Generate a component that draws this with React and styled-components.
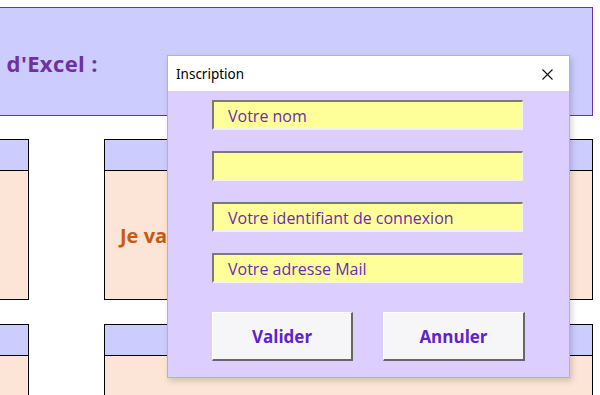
import React from "react";
import styled, { createGlobalStyle } from "styled-components";

const Global = createGlobalStyle`
  html, body { margin: 0; padding: 0; background: #ffffff; }
  body { width: 600px; height: 395px; overflow: hidden; font-family: "Open Sans", "Noto Sans", sans-serif; }
`;

const Sheet = styled.div`
  position: relative;
  width: 600px;
  height: 395px;
  overflow: hidden;
  padding-top: 7px;
  box-sizing: border-box;
  background: #ffffff;
`;

const Banner = styled.div`
  margin-left: -300px;
  width: 893px;
  height: 109px;
  box-sizing: border-box;
  border: 1px solid #7030a0;
  background: #ccccff;
  display: flex;
  align-items: center;
`;

const BannerTitle = styled.div`
  width: 397px;
  display: flex;
  justify-content: flex-end;
  white-space: nowrap;
  padding-top: 3px;
  font-family: "Open Sans", sans-serif;
  font-weight: 700;
  font-size: 22px;
  letter-spacing: 0.4px;
  color: #7030a0;
`;

const CardsGrid = styled.div`
  margin-top: 23px;
  margin-left: -100px;
  display: grid;
  grid-template-columns: 129px 489px;
  grid-template-rows: 161px 120px;
  column-gap: 75px;
  row-gap: 24px;
`;

const Card = styled.div`
  border: 1px solid #000000;
  display: flex;
  flex-direction: column;
  background: #fce4d6;
`;

const CardHead = styled.div`
  height: 30px;
  flex: none;
  background: #ccccff;
  border-bottom: 1px solid #000000;
`;

const CardBody = styled.div`
  flex: 1;
  display: flex;
  align-items: center;
  padding-left: 15px;
  font-family: "Open Sans", sans-serif;
  font-weight: 700;
  font-size: 20px;
  color: #c55a11;
  white-space: nowrap;
`;

const Dialog = styled.div`
  position: absolute;
  left: 167px;
  top: 55px;
  width: 403px;
  height: 323px;
  box-sizing: border-box;
  border: 1px solid #a9c08f;
  background: #dccfff;
  box-shadow: 2px 3px 6px rgba(0, 0, 0, 0.16);
  display: flex;
  flex-direction: column;
`;

const TitleBar = styled.div`
  height: 35px;
  flex: none;
  background: #ffffff;
  display: flex;
  align-items: center;
  justify-content: space-between;
  padding: 1px 16px 0 8px;
  box-sizing: border-box;
  font-family: "Noto Sans", sans-serif;
  font-size: 13.5px;
  color: #000000;
`;

const CloseIcon = () => (
  <svg width="11" height="11" viewBox="0 0 11 11">
    <path d="M0.5 0.5 L10.5 10.5 M10.5 0.5 L0.5 10.5" stroke="#111" strokeWidth="1.1" fill="none" />
  </svg>
);

const DialogBody = styled.div`
  flex: 1;
  display: flex;
  flex-direction: column;
  padding: 9px 0 0 44px;
`;

const Fields = styled.div`
  display: flex;
  flex-direction: column;
  gap: 21px;
`;

const Field = styled.div`
  width: 311px;
  height: 30px;
  box-sizing: border-box;
  background: #ffff99;
  border-top: 2px solid #7a7a7a;
  border-left: 2px solid #7a7a7a;
  border-right: 1px solid #f2f2f2;
  border-bottom: 2px solid #f2f2f2;
  padding: 2px 0 0 14px;
  display: flex;
  align-items: center;
  font-family: "Open Sans", sans-serif;
  font-size: 16px;
  color: #6a2cb4;
  white-space: nowrap;
`;

const Buttons = styled.div`
  display: flex;
  gap: 30px;
  margin-top: 29px;
`;

const Button = styled.div`
  width: ${(p) => p.$w}px;
  height: 49px;
  box-sizing: border-box;
  background: #f6f6f8;
  border-top: 1px solid #ffffff;
  border-left: 1px solid #ffffff;
  border-right: 2px solid #666666;
  border-bottom: 2px solid #666666;
  display: flex;
  align-items: center;
  justify-content: center;
  font-family: "Open Sans", sans-serif;
  font-weight: 700;
  font-size: 17px;
  color: #5f22cc;
`;

export default function App() {
  return (
    <>
      <Global />
      <Sheet>
        <Banner>
          <BannerTitle>Formulaire d'inscription utilisateur d'Excel :</BannerTitle>
        </Banner>
        <CardsGrid>
          <Card>
            <CardHead />
            <CardBody />
          </Card>
          <Card>
            <CardHead />
            <CardBody>Je va</CardBody>
          </Card>
          <Card>
            <CardHead />
            <CardBody />
          </Card>
          <Card>
            <CardHead />
            <CardBody />
          </Card>
        </CardsGrid>
        <Dialog>
          <TitleBar>
            <span>Inscription</span>
            <CloseIcon />
          </TitleBar>
          <DialogBody>
            <Fields>
              <Field>Votre nom</Field>
              <Field />
              <Field>Votre identifiant de connexion</Field>
              <Field>Votre adresse Mail</Field>
            </Fields>
            <Buttons>
              <Button $w={141}>Valider</Button>
              <Button $w={142}>Annuler</Button>
            </Buttons>
          </DialogBody>
        </Dialog>
      </Sheet>
    </>
  );
}
